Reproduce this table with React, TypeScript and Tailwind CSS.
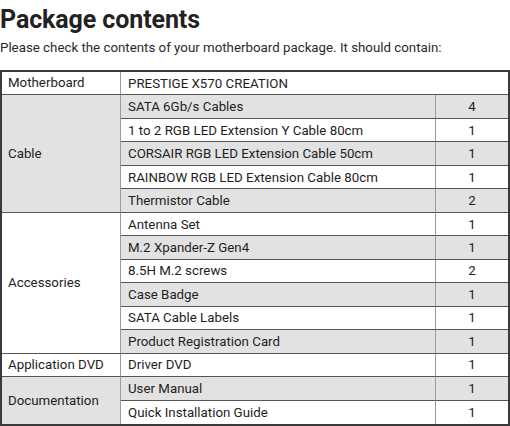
const rows: { group?: string; span?: number; item: string; qty?: string; gBg?: boolean; iBg: boolean }[] = [
  { group: 'Motherboard', span: 1, item: 'PRESTIGE X570 CREATION', gBg: false, iBg: false },
  { group: 'Cable', span: 5, item: 'SATA 6Gb/s Cables', qty: '4', gBg: true, iBg: true },
  { item: '1 to 2 RGB LED Extension Y Cable 80cm', qty: '1', iBg: false },
  { item: 'CORSAIR RGB LED Extension Cable 50cm', qty: '1', iBg: true },
  { item: 'RAINBOW RGB LED Extension Cable 80cm', qty: '1', iBg: false },
  { item: 'Thermistor Cable', qty: '2', iBg: true },
  { group: 'Accessories', span: 6, item: 'Antenna Set', qty: '1', gBg: false, iBg: false },
  { item: 'M.2 Xpander-Z Gen4', qty: '1', iBg: true },
  { item: '8.5H M.2 screws', qty: '2', iBg: false },
  { item: 'Case Badge', qty: '1', iBg: true },
  { item: 'SATA Cable Labels', qty: '1', iBg: false },
  { item: 'Product Registration Card', qty: '1', iBg: true },
  { group: 'Application DVD', span: 1, item: 'Driver DVD', qty: '1', gBg: false, iBg: false },
  { group: 'Documentation', span: 2, item: 'User Manual', qty: '1', gBg: true, iBg: true },
  { item: 'Quick Installation Guide', qty: '1', iBg: false },
];

const rowStart = ['row-start-1', 'row-start-2', 'row-start-3', 'row-start-4', 'row-start-5', 'row-start-6', 'row-start-7', 'row-start-8', 'row-start-9', 'row-start-10', 'row-start-11', 'row-start-12', 'row-start-13', 'row-start-14', 'row-start-15'];
const rowSpan: Record<number, string> = { 1: 'row-span-1', 2: 'row-span-2', 5: 'row-span-5', 6: 'row-span-6' };

export default function App() {
  return (
    <div className="w-[510px] h-[426px] bg-white text-[#222] font-['Roboto',sans-serif] overflow-hidden">
      <h1 className="text-[25px] font-bold leading-[30px] pt-[5px] tracking-[-0.1px]">Package contents</h1>
      <p className="text-[13.3px] leading-[16px] mt-[5px] text-[#2a2a2a]">
        Please check the contents of your motherboard package. It should contain:
      </p>
      <div className="mt-[14px] w-[510px] h-[356px] border-2 border-[#3a3a3a] grid grid-cols-[119px_315px_72px] grid-rows-[repeat(15,1fr)] text-[13.3px] text-[#1e1e1e]">
        {rows.map((r, i) => {
          const last = i === rows.length - 1;
          return [
            r.group ? (
              <div
                key={'g' + i}
                className={`col-start-1 ${rowStart[i]} ${rowSpan[r.span!]} flex items-center pl-[6px] border-r border-r-[#9a9a9a] ${i + r.span! < rows.length ? 'border-b border-b-[#555]' : ''} ${r.gBg ? 'bg-[#e2e2e2]' : 'bg-white'}`}
              >
                {r.group}
              </div>
            ) : null,
            <div
              key={'i' + i}
              className={`${r.qty ? 'col-start-2' : 'col-start-2 col-span-2'} ${rowStart[i]} flex items-center pl-[7px] pt-[1px] ${r.qty ? 'border-r border-r-[#9a9a9a]' : ''} ${last ? '' : 'border-b border-b-[#555]'} ${r.iBg ? 'bg-[#e2e2e2]' : 'bg-white'}`}
            >
              {r.item}
            </div>,
            r.qty ? (
              <div
                key={'q' + i}
                className={`col-start-3 ${rowStart[i]} flex items-center justify-center pt-[1px] ${last ? '' : 'border-b border-b-[#555]'} ${r.iBg ? 'bg-[#e2e2e2]' : 'bg-white'}`}
              >
                {r.qty}
              </div>
            ) : null,
          ];
        })}
      </div>
    </div>
  );
}
